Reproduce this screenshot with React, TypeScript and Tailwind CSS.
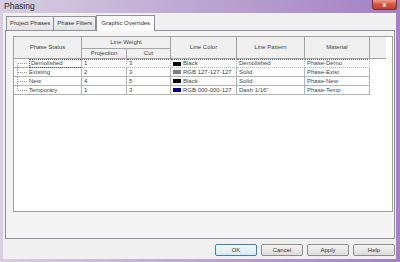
const rows = [
  { name: 'Demolished', proj: '1', cut: '3', color: '#000000', colorName: 'Black', pattern: 'Demolished', material: 'Phase-Demo' },
  { name: 'Existing', proj: '2', cut: '3', color: '#7f7f7f', colorName: 'RGB 127-127-127', pattern: 'Solid', material: 'Phase-Exist' },
  { name: 'New', proj: '4', cut: '5', color: '#000000', colorName: 'Black', pattern: 'Solid', material: 'Phase-New' },
  { name: 'Temporary', proj: '1', cut: '3', color: '#00007f', colorName: 'RGB 000-000-127', pattern: 'Dash 1/16"', material: 'Phase-Temp' },
];

const TreeLines = ({ first, last }: { first: boolean; last: boolean }) => (
  <svg width="14" height="9" className="shrink-0">
    <line x1="2.5" y1={first ? 4.5 : 0} x2="2.5" y2={last ? 4.5 : 9} stroke="#9a9a9a" strokeDasharray="1 1" />
    <line x1="3" y1="4.5" x2="13" y2="4.5" stroke="#9a9a9a" strokeDasharray="1 1" />
  </svg>
);

const Button = ({ label, primary }: { label: string; primary?: boolean }) => (
  <div
    className={
      'w-[42px] h-[12px] flex items-center justify-center rounded-[2px] text-[6px] text-[#333] bg-gradient-to-b ' +
      (primary
        ? 'border border-[#3c7fb1] from-[#f2f8fc] to-[#dbe9f4]'
        : 'border border-[#8c8c8c] from-[#f4f4f4] to-[#dcdcdc]')
    }
  >
    {label}
  </div>
);

export default function App() {
  const head = 'bg-[#f0f0f0] border-r border-b border-[#a5a5a5] flex items-center justify-center text-[6px] text-[#444]';
  const cell = 'border-r border-b border-[#b4b4b4] flex items-center pl-[2px] text-[6px] text-[#444] leading-[9px] whitespace-nowrap';

  return (
    <div className="w-[400px] h-[262px] flex flex-col bg-gradient-to-r from-[#d7cfe1] via-[#bba6d1] to-[#a381c3] font-['Liberation_Sans',Arial,sans-serif]">
      <div className="h-[13px] flex items-start">
        <div className="pl-[4px] pt-[1px] text-[8.5px] leading-[10px] text-[#2a2a2a]">Phasing</div>
        <div className="flex-1" />
        <div className="mr-[3px] w-[25px] h-[10px] rounded-b-[3px] border border-t-0 border-[#7a3030] bg-gradient-to-b from-[#eba08e] via-[#d5543c] to-[#c4422e] flex items-center justify-center text-white text-[7px] font-bold leading-none">
          x
        </div>
      </div>

      <div className="flex-1 ml-[3px] mr-[4px] mb-[3px] bg-[#f0f0f0] flex flex-col">
        <div className="h-[17px] flex items-end pl-[3px] text-[6px] text-[#333]">
          <div className="h-[14px] px-[3px] flex items-center border border-b-0 border-[#8e9199] bg-gradient-to-b from-[#f3f3f3] to-[#e3e3e3]">
            Project Phases
          </div>
          <div className="h-[14px] px-[3px] flex items-center border border-b-0 border-l-0 border-[#8e9199] bg-gradient-to-b from-[#f3f3f3] to-[#e3e3e3]">
            Phase Filters
          </div>
          <div className="h-[16px] px-[4px] -mb-px relative flex items-center border border-b-0 border-[#8e9199] bg-[#fcfcfc]">
            Graphic Overrides
          </div>
        </div>

        <div className="flex-1 ml-[2px] mr-[1px] border border-[#8e9199] bg-[#f4f4f4] flex flex-col pl-[7px] pr-[1px] pt-[5px] pb-[26px]">
          <div className="flex-1 bg-white border border-[#a0a0a0]">
            <div className="grid grid-cols-[68px_45px_44px_66px_68px_65px_16px] grid-rows-[12px_10px_9px_9px_9px_9px]">
              <div className={head + ' row-span-2'}>Phase Status</div>
              <div className={head + ' col-span-2'}>Line Weight</div>
              <div className={head + ' row-span-2'}>Line Color</div>
              <div className={head + ' row-span-2'}>Line Pattern</div>
              <div className={head + ' row-span-2'}>Material</div>
              <div className="row-span-2 bg-[#f0f0f0] border-b border-[#a5a5a5]" />
              <div className={head}>Projection</div>
              <div className={head}>Cut</div>

              {rows.map((r, i) => {
                const focus = i === 0 ? ' border-t border-t-[#666] border-dotted' : '';
                return [
                  <div key={r.name + 'a'} className="border-r border-b border-[#b4b4b4] flex items-center text-[6px] text-[#444] leading-[9px] pl-[1px]">
                    <TreeLines first={i === 0} last={i === rows.length - 1} />
                    <span className={i === 0 ? 'h-[9px] border-l border-t border-b border-dotted border-[#555] pl-px leading-[7px] flex-1' : ''}>
                      {r.name}
                    </span>
                  </div>,
                  <div key={r.name + 'b'} className={cell + focus}>{r.proj}</div>,
                  <div key={r.name + 'c'} className={cell + focus}>{r.cut}</div>,
                  <div key={r.name + 'd'} className={cell + focus}>
                    <span className="w-[8px] h-[4px] mr-[2px] shrink-0" style={{ backgroundColor: r.color }} />
                    {r.colorName}
                  </div>,
                  <div key={r.name + 'e'} className={cell + focus}>{r.pattern}</div>,
                  <div key={r.name + 'f'} className={cell + focus}>{r.material}</div>,
                  <div key={r.name + 'g'} />,
                ];
              })}
            </div>
          </div>
        </div>

        <div className="flex justify-end gap-[4px] pt-[5px] pb-[3px] pr-[1px]">
          <Button label="OK" primary />
          <Button label="Cancel" />
          <Button label="Apply" />
          <Button label="Help" />
        </div>
      </div>
    </div>
  );
}
